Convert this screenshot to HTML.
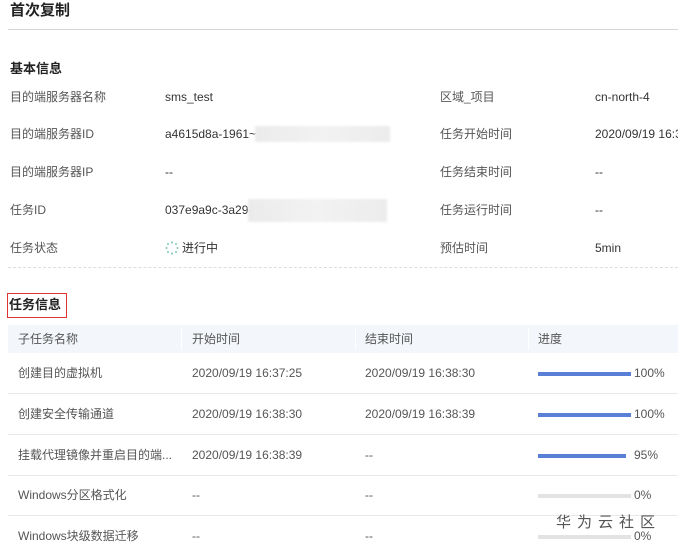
<!DOCTYPE html>
<html><head><meta charset="utf-8"><style>
body{margin:0;width:678px;height:548px;overflow:hidden;background:#fff;font-family:"Liberation Sans","Noto Sans CJK SC",sans-serif;color:#333;font-size:12px;position:relative}
.a{position:absolute;white-space:nowrap;line-height:16px}
.l{color:#555}
.blur{position:absolute;background:linear-gradient(90deg,#ebebeb,#f2f2f2 50%,#ececec);filter:blur(1px)}
.bar{position:absolute;left:538px;width:93px;height:4px;background:#e3e3e3}
.bar i{display:block;height:4px;background:#5a7fd6}
</style></head><body>
<div class="a" style="left:10px;top:1px;font-size:15px;line-height:20px;font-weight:bold;color:#222">首次复制</div>
<div class="a" style="left:8px;top:29px;width:670px;height:1px;background:#d6d6d6"></div>
<div class="a" style="left:10px;top:60px;font-size:13px;line-height:18px;font-weight:bold;color:#222">基本信息</div>

<div class="a l" style="left:10px;top:89px">目的端服务器名称</div><div class="a" style="left:165px;top:89px">sms_test</div>
<div class="a l" style="left:440px;top:89px">区域_项目</div><div class="a" style="left:595px;top:89px">cn-north-4</div>
<div class="a l" style="left:10px;top:126px">目的端服务器ID</div><div class="a" style="left:165px;top:126px">a4615d8a-1961~</div>
<div class="blur" style="left:255px;top:126px;width:135px;height:16px"></div>
<div class="a l" style="left:440px;top:126px">任务开始时间</div><div class="a" style="left:595px;top:126px">2020/09/19 16:3</div>
<div class="a l" style="left:10px;top:164px">目的端服务器IP</div><div class="a" style="left:165px;top:164px">--</div>
<div class="a l" style="left:440px;top:164px">任务结束时间</div><div class="a" style="left:595px;top:164px">--</div>
<div class="a l" style="left:10px;top:202px">任务ID</div><div class="a" style="left:165px;top:202px">037e9a9c-3a29-</div>
<div class="blur" style="left:248px;top:199px;width:139px;height:23px"></div>
<div class="a l" style="left:440px;top:202px">任务运行时间</div><div class="a" style="left:595px;top:202px">--</div>
<div class="a l" style="left:10px;top:240px">任务状态</div>
<svg class="a" style="left:165px;top:241px" width="14" height="14" viewBox="0 0 14 14"><g fill="#7cc8b8"><circle cx="7" cy="1.5" r="1"/><circle cx="11" cy="3" r="1"/><circle cx="12.5" cy="7" r="1"/><circle cx="11" cy="11" r="1"/><circle cx="7" cy="12.5" r="1"/><circle cx="3" cy="11" r="1"/><circle cx="1.5" cy="7" r="1"/><circle cx="3" cy="3" r="1"/></g></svg>
<div class="a" style="left:182px;top:240px">进行中</div>
<div class="a l" style="left:440px;top:240px">预估时间</div><div class="a" style="left:595px;top:240px">5min</div>
<div class="a" style="left:8px;top:267px;width:670px;border-top:1px dashed #ddd"></div>

<div class="a" style="left:7px;top:293px;width:58px;height:23px;border:1px solid #d33"></div>
<div class="a" style="left:9px;top:296px;font-size:13px;line-height:18px;font-weight:bold;color:#222">任务信息</div>

<div class="a" style="left:8px;top:325px;width:670px;height:28px;background:#f3f6fa"></div>
<div class="a" style="left:181px;top:328px;width:1px;height:22px;background:#fff"></div>
<div class="a" style="left:355px;top:328px;width:1px;height:22px;background:#fff"></div>
<div class="a" style="left:528px;top:328px;width:1px;height:22px;background:#fff"></div>
<div class="a l" style="left:18px;top:331px">子任务名称</div>
<div class="a l" style="left:192px;top:331px">开始时间</div>
<div class="a l" style="left:365px;top:331px">结束时间</div>
<div class="a l" style="left:538px;top:331px">进度</div>

<div class="a" style="left:8px;top:393px;width:670px;height:1px;background:#e8e8e8"></div>
<div class="a" style="left:8px;top:434px;width:670px;height:1px;background:#e8e8e8"></div>
<div class="a" style="left:8px;top:475px;width:670px;height:1px;background:#e8e8e8"></div>
<div class="a" style="left:8px;top:515px;width:670px;height:1px;background:#e8e8e8"></div>

<div class="a l" style="left:18px;top:365px">创建目的虚拟机</div><div class="a l" style="left:192px;top:365px">2020/09/19 16:37:25</div><div class="a l" style="left:365px;top:365px">2020/09/19 16:38:30</div>
<div class="bar" style="top:372px"><i style="width:93px"></i></div><div class="a l" style="left:634px;top:365px">100%</div>
<div class="a l" style="left:18px;top:406px">创建安全传输通道</div><div class="a l" style="left:192px;top:406px">2020/09/19 16:38:30</div><div class="a l" style="left:365px;top:406px">2020/09/19 16:38:39</div>
<div class="bar" style="top:413px"><i style="width:93px"></i></div><div class="a l" style="left:634px;top:406px">100%</div>
<div class="a l" style="left:18px;top:447px">挂载代理镜像并重启目的端...</div><div class="a l" style="left:192px;top:447px">2020/09/19 16:38:39</div><div class="a l" style="left:365px;top:447px">--</div>
<div class="bar" style="top:454px;width:88px"><i style="width:88px"></i></div><div class="a l" style="left:634px;top:447px">95%</div>
<div class="a l" style="left:18px;top:487px">Windows分区格式化</div><div class="a l" style="left:192px;top:487px">--</div><div class="a l" style="left:365px;top:487px">--</div>
<div class="bar" style="top:494px"></div><div class="a l" style="left:634px;top:487px">0%</div>
<div class="a l" style="left:18px;top:528px">Windows块级数据迁移</div><div class="a l" style="left:192px;top:528px">--</div><div class="a l" style="left:365px;top:528px">--</div>
<div class="bar" style="top:535px"></div><div class="a l" style="left:634px;top:528px">0%</div>
<div class="a" style="left:556px;top:513px;font-size:15px;line-height:20px;color:#555;letter-spacing:6px">华为云社区</div>
</body></html>
